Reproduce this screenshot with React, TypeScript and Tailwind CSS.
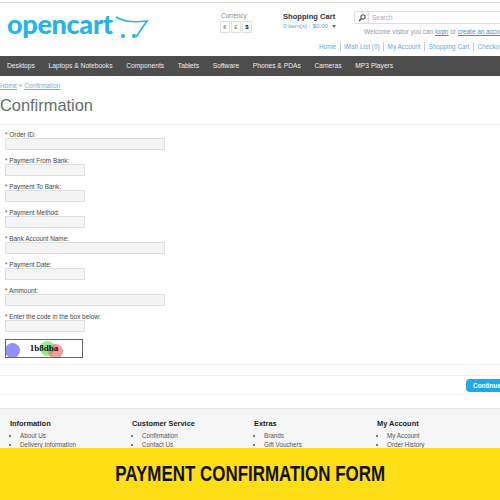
import React from "react";

function Field({ label, wide, first }: { label: string; wide?: boolean; first?: boolean }) {
  return (
    <div className={first ? "mt-[6px]" : "mt-[7px]"}>
      <div className="text-[6.4px] leading-[7px] text-[#444]">
        <span className="text-[#e02020]">*</span> {label}
      </div>
      <div className={`${wide ? "w-[160px]" : "w-[80px]"} h-[12px] bg-[#f4f4f4] border border-[#e0e0e0]`} />
    </div>
  );
}

function FooterCol({ title, items, cls }: { title: string; items: string[]; cls: string }) {
  return (
    <div className={cls}>
      <div className="text-[7.4px] leading-[10px] font-bold text-[#222]">{title}</div>
      <ul className="mt-[2px] pl-[10px] list-disc text-[6.3px] leading-[9px] text-[#555]">
        {items.map((i) => (
          <li key={i}>{i}</li>
        ))}
      </ul>
    </div>
  );
}

const nav = [
  "Desktops",
  "Laptops & Notebooks",
  "Components",
  "Tablets",
  "Software",
  "Phones & PDAs",
  "Cameras",
  "MP3 Players",
];

const topLinks = ["Home", "Wish List (0)", "My Account", "Shopping Cart", "Checkout"];

export default function App() {
  return (
    <div className="w-[500px] h-[500px] overflow-hidden bg-white flex flex-col font-['Liberation_Sans',Arial,sans-serif]">
      <div className="flex-1 min-h-0 overflow-hidden flex flex-col">
        {/* header */}
        <div className="mt-[2px] h-[54px] border-t border-[#dddddd] flex shrink-0">
          <div className="w-[220px] shrink-0 pl-[7px] pt-[7px] flex items-start">
            <span className="font-['Lato',sans-serif] font-black text-[27px] leading-[27px] tracking-[-0.3px] text-[#22b4ea]">
              opencart
            </span>
            <svg width="34" height="24" viewBox="0 0 34 24" className="ml-[3px] mt-[6px] shrink-0">
              <path d="M0 1 C8 6 20 6.5 31 5 L20 21" fill="none" stroke="#22b4ea" strokeWidth="1.6" />
              <circle cx="7" cy="20" r="2" fill="#22b4ea" />
              <circle cx="18" cy="20" r="2" fill="#22b4ea" />
            </svg>
          </div>
          <div className="w-[63px] shrink-0 pt-[8px]">
            <div className="text-[6.3px] leading-[9px] text-[#888] pl-[1px]">Currency</div>
            <div className="mt-[1px] flex gap-[1px] text-[6px] leading-[10px] text-center">
              <span className="w-[10px] h-[12px] border border-[#e0e0e0] text-[#777]">€</span>
              <span className="w-[10px] h-[12px] border border-[#e0e0e0] text-[#777]">£</span>
              <span className="w-[10px] h-[12px] border border-[#e0e0e0] text-[#111] font-bold">$</span>
            </div>
          </div>
          <div className="w-[71px] shrink-0 pt-[9px]">
            <div className="text-[7.6px] leading-[10px] font-bold text-[#333]">Shopping Cart</div>
            <div className="mt-[-1px] text-[6.2px] leading-[10px] text-[#5a9fd0] flex items-center">
              0 item(s) - $0.00
              <span className="ml-[4px] w-0 h-0 border-x-[2.5px] border-x-transparent border-t-[3px] border-t-[#666]" />
            </div>
          </div>
          <div className="flex-1 min-w-0 pt-[8px]">
            <div className="h-[13px] w-[200px] border border-[#dddddd] rounded-l-[2px] flex items-center">
              <div className="w-[14px] h-full border-r border-[#dddddd] flex items-center justify-center">
                <svg width="8" height="8" viewBox="0 0 8 8">
                  <circle cx="5" cy="3" r="2.2" fill="none" stroke="#333" strokeWidth="1" />
                  <path d="M3.4 4.6 L1 7" stroke="#333" strokeWidth="1.2" />
                </svg>
              </div>
              <span className="ml-[3px] text-[6.5px] leading-[9px] text-[#aaa]">Search</span>
            </div>
            <div className="mt-[3px] ml-[10px] text-[6.4px] leading-[10px] text-[#999] whitespace-nowrap">
              Welcome visitor you can <span className="text-[#3f93c9] underline">login</span> or{" "}
              <span className="text-[#3f93c9] underline">create an account</span>
            </div>
          </div>
        </div>
        <div className="h-0 relative shrink-0">
          <div className="absolute left-[319px] top-[-14px] flex whitespace-nowrap text-[6.4px] leading-[9px] text-[#6aa9d6]">
            {topLinks.map((l, i) => (
              <span key={l} className={i ? "ml-[3.5px] pl-[3.5px] border-l border-[#cccccc]" : ""}>
                {l}
              </span>
            ))}
          </div>
        </div>
        {/* nav */}
        <div className="h-[20px] bg-[#4d4d4d] shrink-0 flex items-center pl-[7px] gap-[13.7px] text-[6.7px] text-[#eeeeee] whitespace-nowrap">
          {nav.map((n) => (
            <span key={n}>{n}</span>
          ))}
        </div>
        {/* breadcrumb */}
        <div className="mt-[5px] text-[6.4px] leading-[9px] text-[#6fb4e0] shrink-0">
          <span className="underline">Home</span> <span className="text-[#999]">»</span>{" "}
          <span className="underline">Confirmation</span>
        </div>
        <div className="mt-[5px] text-[16.4px] leading-[20px] text-[#666c70] shrink-0">Confirmation</div>
        <div className="mt-[9px] border-t border-[#eeeeee] shrink-0" />
        {/* form */}
        <div className="pl-[5px] shrink-0">
          <Field label="Order ID:" wide first />
          <Field label="Payment From Bank:" />
          <Field label="Payment To Bank:" />
          <Field label="Payment Method:" />
          <Field label="Bank Account Name:" wide />
          <Field label="Payment Date:" />
          <Field label="Ammount:" wide />
          <Field label="Enter the code in the box below:" />
          <div className="relative mt-[7px] w-[78px] h-[19px] border border-[#666666] overflow-hidden flex items-center justify-center">
            <span className="absolute left-[-1px] top-[3px] w-[15px] h-[15px] rounded-full bg-[#9090ff]" />
            <span className="absolute left-[34px] top-[1px] w-[15px] h-[15px] rounded-full bg-[#80f080]/90" />
            <span className="absolute left-[42px] top-[4px] w-[15px] h-[15px] rounded-full bg-[#f07070]/70" />
            <span className="relative font-['Liberation_Serif',serif] font-bold text-[9px] text-[#111]">1b8dba</span>
          </div>
        </div>
        <div className="mt-[6px] border-t border-[#eeeeee] shrink-0" />
        <div className="mt-[10px] border-t border-[#eeeeee] shrink-0" />
        <div className="h-[19px] flex items-center justify-end shrink-0 border-b border-[#f2f2f2]">
          <span className="w-[38px] h-[13px] -mr-[4px] rounded-[4px] bg-[#1ea9e6] text-white text-[6.5px] font-bold leading-[13px] pl-[7px]">
            Continue
          </span>
        </div>
        {/* footer */}
        <div className="mt-[13px] flex-1 bg-[#f6f6f6] border-t border-[#e4e4e4] pl-[10px] pt-[10px] flex items-start">
          <FooterCol title="Information" items={["About Us", "Delivery Information"]} cls="w-[122px]" />
          <FooterCol title="Customer Service" items={["Confirmation", "Contact Us"]} cls="w-[122px]" />
          <FooterCol title="Extras" items={["Brands", "Gift Vouchers"]} cls="w-[123px]" />
          <FooterCol title="My Account" items={["My Account", "Order History"]} cls="w-[120px]" />
        </div>
      </div>
      {/* banner */}
      <div className="h-[52px] shrink-0 bg-[#ffdd17] flex items-center justify-center pb-[1px]">
        <span className="font-bold text-[22px] text-[#111] whitespace-nowrap scale-x-[0.77]">
          PAYMENT CONFIRMATION FORM
        </span>
      </div>
    </div>
  );
}
